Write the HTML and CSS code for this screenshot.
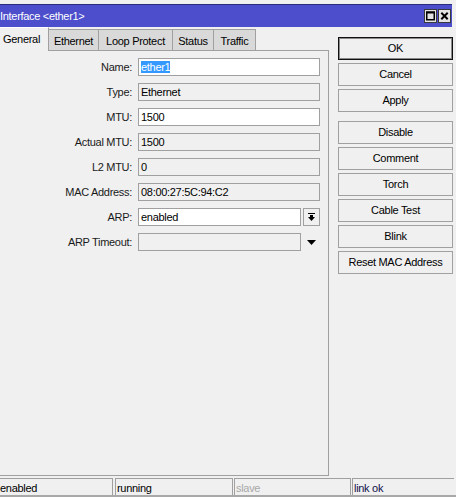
FILE: index.html
```html
<!DOCTYPE html>
<html>
<head>
<meta charset="utf-8">
<title>Interface &lt;ether1&gt;</title>
<link rel="stylesheet" href="styles.css">
</head>
<body>
<div class="window">
  <div class="topstrip"></div>
  <div class="titlebar">
    <span class="title">Interface &lt;ether1&gt;</span>
    <div class="tbtns">
      <span class="tbtn"><svg width="11" height="12" viewBox="0 0 11 12"><rect x="1.75" y="2.25" width="7.5" height="7.5" fill="none" stroke="#000" stroke-width="1.5"/><rect x="1" y="1.5" width="9" height="2" fill="#000"/></svg></span>
      <span class="tbtn"><svg width="11" height="12" viewBox="0 0 11 12"><path d="M2.3 2.8 L8.7 9.2 M8.7 2.8 L2.3 9.2" stroke="#000" stroke-width="2"/></svg></span>
    </div>
  </div>
  <div class="main">
    <div class="leftcol">
      <div class="tabs">
        <div class="tab active t-general">General</div>
        <div class="tab t-ethernet">Ethernet</div>
        <div class="tab t-loop">Loop Protect</div>
        <div class="tab t-status">Status</div>
        <div class="tab t-traffic">Traffic</div>
      </div>
      <div class="panel">
        <div class="form">
          <div class="row"><label class="lbl">Name:</label><div class="field edit"><span class="sel">ether1</span></div></div>
          <div class="row"><label class="lbl">Type:</label><div class="field ro">Ethernet</div></div>
          <div class="row"><label class="lbl">MTU:</label><div class="field edit">1500</div></div>
          <div class="row"><label class="lbl">Actual MTU:</label><div class="field ro">1500</div></div>
          <div class="row"><label class="lbl">L2 MTU:</label><div class="field ro">0</div></div>
          <div class="row"><label class="lbl">MAC Address:</label><div class="field ro">08:00:27:5C:94:C2</div></div>
          <div class="row"><label class="lbl">ARP:</label><div class="field edit short">enabled</div><span class="ddbtn"><svg width="7" height="9" viewBox="0 0 7 9"><rect x="0" y="0" width="7" height="1" fill="#000"/><rect x="2" y="2" width="3" height="2" fill="#000"/><polygon points="0,4 7,4 3.5,8" fill="#000"/></svg></span></div>
          <div class="row"><label class="lbl">ARP Timeout:</label><div class="field ro short"></div><span class="ddarrow"><svg width="9" height="5" viewBox="0 0 9 5"><polygon points="0,0 9,0 4.5,5" fill="#000"/></svg></span></div>
        </div>
      </div>
    </div>
    <div class="buttons">
      <div class="btn default">OK</div>
      <div class="btn">Cancel</div>
      <div class="btn">Apply</div>
      <div class="btn sep">Disable</div>
      <div class="btn">Comment</div>
      <div class="btn">Torch</div>
      <div class="btn">Cable Test</div>
      <div class="btn">Blink</div>
      <div class="btn">Reset MAC Address</div>
    </div>
  </div>
  <div class="status">
    <div class="cell c1">enabled</div>
    <div class="cell c2">running</div>
    <div class="cell c3 dim">slave</div>
    <div class="cell c4 link">link ok</div>
  </div>
  <div class="bottomband"></div>
</div>
</body>
</html>
```

FILE: styles.css
```css
html, body {
  margin: 0;
  padding: 0;
}
body {
  background: #f0f0f0;
  font-family: "Liberation Sans", Arial, sans-serif;
  font-size: 11px;
  letter-spacing: -0.3px;
  color: #000;
}
.window {
  width: 456px;
  height: 497px;
  background: #f0f0f0;
  overflow: hidden;
  display: flex;
  flex-direction: column;
}
.topstrip {
  height: 4px;
  flex: none;
}
.titlebar {
  flex: none;
  width: 452px;
  height: 22px;
  background: #4c4ecb;
  border-top: 1px solid #2a2c7c;
  display: flex;
  align-items: center;
  justify-content: space-between;
  color: #fff;
}
.title {
  padding-left: 0;
  line-height: 14px;
  margin-top: -1px;
}
.tbtns {
  display: flex;
  gap: 1px;
  padding-right: 1px;
}
.tbtn {
  width: 11px;
  height: 12px;
  border: 1px solid #3a3a3a;
  background: #e4e4e4;
  display: block;
}
.tbtn svg {
  display: block;
}
.main {
  flex: none;
  display: flex;
  height: 449px;
}
.leftcol {
  width: 329px;
  display: flex;
  flex-direction: column;
}
.tabs {
  height: 23px;
  display: flex;
  align-items: flex-end;
}
.tab {
  box-sizing: border-box;
  height: 21px;
  background: #d9d9d9;
  border-top: 1px solid #a0a0a0;
  border-right: 1px solid #a0a0a0;
  padding-top: 4px;
  line-height: 14px;
  text-align: center;
  white-space: nowrap;
}
.tab.active {
  height: 24px;
  margin-bottom: -1px;
  background: #f0f0f0;
  border-top: 1px solid #ffffff;
  text-align: left;
  padding-left: 3px;
  padding-top: 4px;
  position: relative;
  z-index: 1;
}
.t-general { width: 49px; }
.t-ethernet { width: 50px; }
.t-loop { width: 74px; }
.t-status { width: 41px; }
.t-traffic { width: 42px; }
.panel {
  box-sizing: border-box;
  height: 426px;
  border-top: 1px solid #a0a0a0;
  border-right: 1px solid #a0a0a0;
  border-bottom: 1px solid #a0a0a0;
}
.form {
  padding-top: 7px;
  display: flex;
  flex-direction: column;
  gap: 7px;
}
.row {
  display: flex;
  align-items: center;
  height: 18px;
}
.lbl {
  width: 132px;
  margin-right: 6px;
  text-align: right;
  line-height: 18px;
  color: #1a1a1a;
}
.field {
  box-sizing: border-box;
  width: 182px;
  height: 18px;
  border: 1px solid #a0a0a0;
  padding-left: 2px;
  line-height: 16px;
  white-space: nowrap;
  overflow: hidden;
}
.field.edit {
  background: #ffffff;
}
.field.ro {
  background: #f0f0f0;
}
.field.short {
  width: 163px;
}
.sel {
  background: #3399ff;
  color: #fff;
}
.ddbtn {
  box-sizing: border-box;
  width: 17px;
  height: 18px;
  margin-left: 2px;
  border: 1px solid #a0a0a0;
  background: #f0f0f0;
  display: flex;
  align-items: center;
  justify-content: center;
}
.ddbtn svg, .ddarrow svg {
  display: block;
}
.ddarrow {
  width: 19px;
  display: flex;
  justify-content: flex-start;
  padding-left: 6px;
  box-sizing: border-box;
  padding-top: 1px;
}
.buttons {
  margin-left: 9px;
  padding-top: 10px;
  width: 115px;
  display: flex;
  flex-direction: column;
  gap: 3px;
}
.btn {
  box-sizing: border-box;
  height: 23px;
  border: 1px solid #a0a0a0;
  background: #f0f0f0;
  text-align: center;
  line-height: 21px;
  white-space: nowrap;
}
.btn.default {
  border: 1px solid #111;
  box-shadow: inset 0 0 0 1px #8a8a8a;
}
.btn.sep {
  margin-top: 6px;
}
.status {
  flex: none;
  margin-top: 2px;
  display: flex;
  height: 17px;
}
.cell {
  box-sizing: border-box;
  height: 17px;
  border-top: 1px solid #a0a0a0;
  border-left: 1px solid #a0a0a0;
  border-right: 1px solid #a0a0a0;
  padding-top: 2px;
  padding-left: 1px;
  line-height: 14px;
  white-space: nowrap;
}
.c1 {
  width: 113px;
  border-left: none;
  padding-left: 0;
}
.c2 {
  width: 118px;
  margin-left: 2px;
}
.c3 {
  width: 117px;
  margin-left: 1px;
}
.c4 {
  width: 102px;
  margin-left: 1px;
  border-right: none;
}
.dim {
  color: #a8a8a8;
}
.link {
  color: #10104a;
}
.bottomband {
  flex: none;
  height: 3px;
  background: #a8a8a8;
}
```
